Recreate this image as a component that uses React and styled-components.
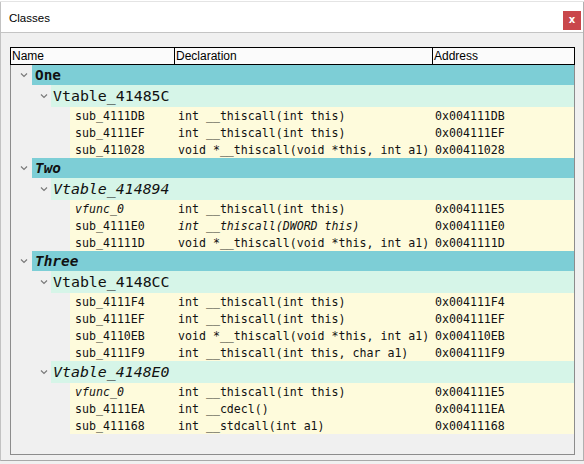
import React from "react";
import styled, { createGlobalStyle } from "styled-components";

const Global = createGlobalStyle`
  html, body { margin: 0; padding: 0; background: #f0f0f0; }
  * { box-sizing: border-box; }
`;

const groups = [
  {
    name: "One",
    italic: false,
    vtables: [
      {
        name: "Vtable_41485C",
        funcs: [
          { n: "sub_4111DB", d: "int __thiscall(int this)", a: "0x004111DB" },
          { n: "sub_4111EF", d: "int __thiscall(int this)", a: "0x004111EF" },
          { n: "sub_411028", d: "void *__thiscall(void *this, int a1)", a: "0x00411028" },
        ],
      },
    ],
  },
  {
    name: "Two",
    italic: true,
    vtables: [
      {
        name: "Vtable_414894",
        italic: true,
        funcs: [
          { n: "vfunc_0", ni: true, d: "int __thiscall(int this)", a: "0x004111E5" },
          { n: "sub_4111E0", d: "int __thiscall(DWORD this)", di: true, a: "0x004111E0" },
          { n: "sub_41111D", d: "void *__thiscall(void *this, int a1)", a: "0x0041111D" },
        ],
      },
    ],
  },
  {
    name: "Three",
    italic: true,
    vtables: [
      {
        name: "Vtable_4148CC",
        funcs: [
          { n: "sub_4111F4", d: "int __thiscall(int this)", a: "0x004111F4" },
          { n: "sub_4111EF", d: "int __thiscall(int this)", a: "0x004111EF" },
          { n: "sub_4110EB", d: "void *__thiscall(void *this, int a1)", a: "0x004110EB" },
          { n: "sub_4111F9", d: "int __thiscall(int this, char a1)", a: "0x004111F9" },
        ],
      },
      {
        name: "Vtable_4148E0",
        italic: true,
        funcs: [
          { n: "vfunc_0", ni: true, d: "int __thiscall(int this)", a: "0x004111E5" },
          { n: "sub_4111EA", d: "int __cdecl()", a: "0x004111EA" },
          { n: "sub_411168", d: "int __stdcall(int a1)", a: "0x00411168" },
        ],
      },
    ],
  },
];

const Window = styled.div`
  width: 584px;
  height: 464px;
  display: flex;
  flex-direction: column;
  background: #f0f0f0;
`;

const BackStrip = styled.div`
  height: 2px;
  background: #ffffff;
  border-bottom: 1px solid #e4e4e4;
`;

const Frame = styled.div`
  flex: 1;
  display: flex;
  flex-direction: column;
  border-left: 1px solid #c2c2c2;
  border-right: 1px solid #b0b0b0;
  border-bottom: 1px solid #a8a8a8;
  margin-bottom: 3px;
`;

const TitleBar = styled.div`
  height: 31px;
  background: #ffffff;
  border-bottom: 1px solid #c4c4c4;
  display: flex;
  align-items: center;
  justify-content: space-between;
  padding: 2px 2px 0 8px;
  font-family: "Liberation Sans", Arial, sans-serif;
  font-size: 11.5px;
  color: #000;
`;

const CloseButton = styled.div`
  width: 18px;
  height: 19px;
  margin-top: 4px;
  background: #c9474b;
  color: #fff;
  font-family: "DejaVu Sans", sans-serif;
  font-size: 10px;
  font-weight: bold;
  display: flex;
  align-items: center;
  justify-content: center;
  padding-bottom: 2px;
`;

const Body = styled.div`
  flex: 1;
  padding: 14px 8px 5px 9px;
  display: flex;
`;

const Table = styled.div`
  flex: 1;
  border: 1px solid #8c8c8c;
  background: #f0f0f0;
  display: flex;
  flex-direction: column;
`;

const Header = styled.div`
  display: flex;
  height: 18px;
  margin: -1px -1px 0 -1px;
  border: 1px solid #000;
  background: #fbfbfb;
  font-family: "Liberation Sans", Arial, sans-serif;
  font-size: 12px;
  color: #000;
`;

const HeadCell = styled.div`
  width: ${(p) => (p.$w ? `${p.$w}px` : "auto")};
  flex: ${(p) => (p.$w ? "none" : "1")};
  border-right: ${(p) => (p.$last ? "none" : "1px solid #000")};
  padding-left: 1px;
  line-height: 17px;
`;

const Row = styled.div`
  display: flex;
  height: ${(p) => p.$h}px;
`;

const Indent = styled.div`
  width: ${(p) => p.$w}px;
  flex: none;
  display: flex;
  align-items: center;
  justify-content: flex-end;
  padding-right: ${(p) => p.$pr}px;
`;

const Band = styled.div`
  flex: 1;
  display: flex;
  align-items: center;
  background: ${(p) => p.$bg};
  padding-left: ${(p) => p.$pl}px;
  font-family: "DejaVu Sans Mono", "Liberation Mono", monospace;
  color: #111;
  white-space: pre;
`;

const GroupName = styled.span`
  font-size: 14.4px;
  font-weight: bold;
  font-style: ${(p) => (p.$italic ? "italic" : "normal")};
`;

const VtableName = styled.span`
  font-size: 14.9px;
  font-style: ${(p) => (p.$italic ? "italic" : "normal")};
`;

const Cell = styled.span`
  font-size: 11.6px;
  width: ${(p) => (p.$w ? `${p.$w}px` : "auto")};
  flex: none;
  font-style: ${(p) => (p.$italic ? "italic" : "normal")};
`;

const Chevron = () => (
  <svg width="8" height="6" viewBox="0 0 8 6">
    <polyline points="1,1.5 4,4.5 7,1.5" fill="none" stroke="#7a7a7a" strokeWidth="1.2" />
  </svg>
);

export default function App() {
  return (
    <>
      <Global />
      <Window>
        <BackStrip />
        <Frame>
          <TitleBar>
            <span>Classes</span>
            <CloseButton>x</CloseButton>
          </TitleBar>
          <Body>
            <Table>
              <Header>
                <HeadCell $w={164}>Name</HeadCell>
                <HeadCell $w={258}>Declaration</HeadCell>
                <HeadCell $last>Address</HeadCell>
              </Header>
              {groups.map((g) => (
                <React.Fragment key={g.name}>
                  <Row $h={20}>
                    <Indent $w={21} $pr={4}>
                      <Chevron />
                    </Indent>
                    <Band $bg="#7dced6" $pl={3}>
                      <GroupName $italic={g.italic}>{g.name}</GroupName>
                    </Band>
                  </Row>
                  {g.vtables.map((v) => (
                    <React.Fragment key={v.name}>
                      <Row $h={22}>
                        <Indent $w={40} $pr={3}>
                          <Chevron />
                        </Indent>
                        <Band $bg="#d6f5e8" $pl={2}>
                          <VtableName $italic={v.italic}>{v.name}</VtableName>
                        </Band>
                      </Row>
                      {v.funcs.map((f, i) => (
                        <Row $h={17} key={i}>
                          <Indent $w={59} $pr={0} />
                          <Band $bg="#fefbdc" $pl={5}>
                            <Cell $w={103} $italic={f.ni}>{f.n}</Cell>
                            <Cell $w={257} $italic={f.di}>{f.d}</Cell>
                            <Cell>{f.a}</Cell>
                          </Band>
                        </Row>
                      ))}
                    </React.Fragment>
                  ))}
                </React.Fragment>
              ))}
            </Table>
          </Body>
        </Frame>
      </Window>
    </>
  );
}
